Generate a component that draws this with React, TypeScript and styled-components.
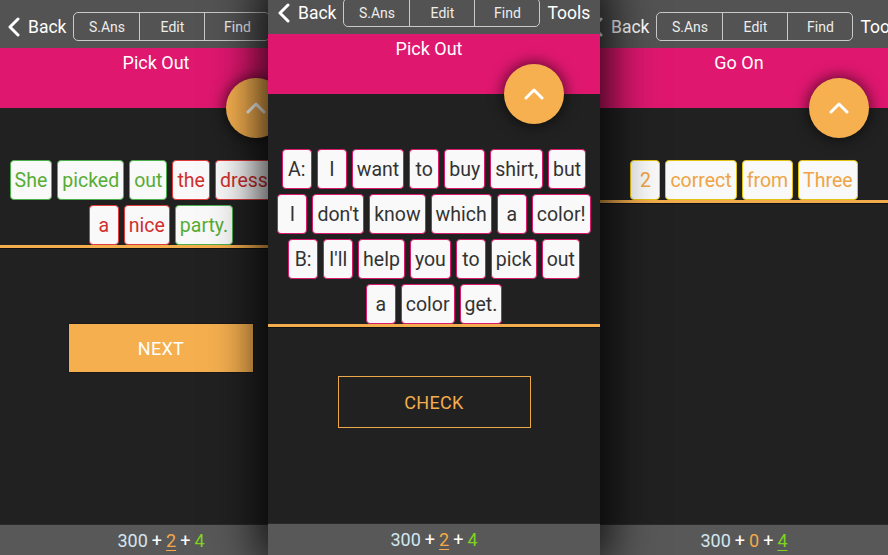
import styled, { createGlobalStyle } from "styled-components";

// Page defaults
const GlobalStyle = createGlobalStyle`
  html, body {
    margin: 0;
    padding: 0;
    background: #212121;
  }
  body {
    font-family: Roboto, "Noto Sans", "Liberation Sans", sans-serif;
  }
`;

// Row of overlapping phone screens
const Stage = styled.main`
  display: flex;
  align-items: flex-start;
  width: 888px;
  height: 555px;
  overflow: hidden;
  background: #212121;
`;

// One phone screen; the front one sits on top with a heavy shadow
const Phone = styled.section<{ $front?: boolean; $overlap?: number }>`
  flex-shrink: 0;
  display: flex;
  flex-direction: column;
  width: ${(p) => (p.$front ? 332 : 322)}px;
  height: ${(p) => (p.$front ? 569 : 555)}px;
  margin-top: ${(p) => (p.$front ? -14 : 0)}px;
  margin-left: ${(p) => -(p.$overlap || 0)}px;
  background: #212121;
  position: relative;
  z-index: ${(p) => (p.$front ? 2 : 1)};
  box-shadow: ${(p) => (p.$front ? "0 0 44px 8px rgba(0, 0, 0, 0.85)" : "none")};
`;

const TopBar = styled.header<{ $inset: number }>`
  flex-shrink: 0;
  display: flex;
  align-items: center;
  height: 48px;
  padding: 5px 0 0 ${(p) => p.$inset}px;
  box-sizing: border-box;
  background: #535353;
  color: #fff;
  white-space: nowrap;
`;

const BackLink = styled.a`
  display: flex;
  align-items: center;
  gap: 8px;
  color: #fff;
  font-size: 17.5px;
  text-decoration: none;
`;

const Segmented = styled.div`
  flex-shrink: 0;
  display: flex;
  margin-left: 7px;
  height: 29px;
  border: 1.5px solid #c9c9c9;
  border-radius: 5px;
  box-sizing: border-box;
  overflow: hidden;
`;

const Segment = styled.button`
  width: 65px;
  display: flex;
  align-items: center;
  justify-content: center;
  background: transparent;
  border: none;
  border-left: 1.5px solid #c9c9c9;
  color: #ededed;
  font-family: Roboto, "Noto Sans", sans-serif;
  font-size: 14px;
  padding: 0;

  &:first-child {
    border-left: none;
  }
`;

const Tools = styled.span`
  margin-left: 7px;
  font-size: 17.5px;
  color: #fff;
`;

// Pink title band with the round orange button on its lower edge
const TitleBand = styled.div`
  flex-shrink: 0;
  position: relative;
  z-index: 3;
  height: 60px;
  padding: 4px 10px 0 0;
  box-sizing: border-box;
  background: #df176f;
  color: #fff;
  font-size: 18px;
  line-height: 22px;
  text-align: center;
`;

const Fab = styled.button`
  position: absolute;
  right: 36px;
  bottom: -30px;
  width: 60px;
  height: 60px;
  border: none;
  border-radius: 50%;
  background: #f6b04f;
  box-shadow: 0 0 14px 2px rgba(0, 0, 0, 0.55);
  display: flex;
  align-items: center;
  justify-content: center;
  padding: 0;
`;

const Body = styled.div<{ $top: number }>`
  flex: 1;
  display: flex;
  flex-direction: column;
  padding-top: ${(p) => p.$top}px;
`;

const WordBoard = styled.div`
  display: flex;
  flex-direction: column;
  gap: 5px;
  border-bottom: 3px solid #f3ad4c;
  box-shadow: 0 1px 0 #111;
`;

const WordRow = styled.div`
  display: flex;
  justify-content: center;
  gap: 5px;
`;

type Kind = "plain" | "right" | "wrong" | "gold";

const tileColors: Record<Kind, { text: string; line: string }> = {
  plain: { text: "#333333", line: "#d8186c" },
  right: { text: "#56ad35", line: "#4cb04c" },
  wrong: { text: "#cf2f2f", line: "#e03a3a" },
  gold: { text: "#eea446", line: "#e3c214" },
};

const Tile = styled.span<{ $kind: Kind }>`
  flex-shrink: 0;
  display: flex;
  align-items: center;
  justify-content: center;
  height: 40px;
  min-width: 30px;
  padding: 0 4px;
  box-sizing: border-box;
  background: #f9f9f9;
  border: 1.5px solid ${(p) => tileColors[p.$kind].line};
  border-radius: 4px;
  color: ${(p) => tileColors[p.$kind].text};
  font-size: 19.5px;
  white-space: nowrap;
`;

const ActionButton = styled.button<{ $filled?: boolean; $gap: number; $w: number; $h: number }>`
  align-self: center;
  margin-top: ${(p) => p.$gap}px;
  width: ${(p) => p.$w}px;
  height: ${(p) => p.$h}px;
  background: ${(p) => (p.$filled ? "#f5af4f" : "transparent")};
  border: ${(p) => (p.$filled ? "1px solid #1a1a1a" : "1.5px solid #eca749")};
  color: ${(p) => (p.$filled ? "#fff" : "#f3ad4c")};
  font-family: Roboto, "Noto Sans", sans-serif;
  font-size: 18px;
  letter-spacing: 0.3px;
`;

const ScoreBar = styled.footer<{ $h: number }>`
  flex-shrink: 0;
  height: ${(p) => p.$h}px;
  display: flex;
  align-items: center;
  justify-content: center;
  gap: 4px;
  background: #585858;
  border-top: 1px solid #2a2a2a;
  box-sizing: border-box;
  font-size: 18px;
  color: #fff;
`;

const ScorePart = styled.span<{ $tone: "base" | "orange" | "green"; $mark?: boolean }>`
  color: ${(p) => (p.$tone === "base" ? "#d3e6f1" : p.$tone === "orange" ? "#f5a847" : "#7fd321")};
  text-decoration: ${(p) => (p.$mark ? "underline" : "none")};
  text-underline-offset: 3px;
`;

const Chevron = ({ up }: { up?: boolean }) =>
  up ? (
    <svg width="20" height="12" viewBox="0 0 20 12">
      <polyline points="2,10 10,2 18,10" fill="none" stroke="#fff" strokeWidth="3" strokeLinecap="round" strokeLinejoin="round" />
    </svg>
  ) : (
    <svg width="12" height="20" viewBox="0 0 12 20">
      <polyline points="10,2 2,10 10,18" fill="none" stroke="#fff" strokeWidth="3" strokeLinecap="round" strokeLinejoin="round" />
    </svg>
  );

type Word = [string, Kind];

const Header = ({ inset, title }: { inset: number; title: string }) => (
  <>
    <TopBar $inset={inset}>
      <BackLink>
        <Chevron />
        Back
      </BackLink>
      <Segmented>
        <Segment>S.Ans</Segment>
        <Segment>Edit</Segment>
        <Segment>Find</Segment>
      </Segmented>
      <Tools>Tools</Tools>
    </TopBar>
    <TitleBand>
      {title}
      <Fab>
        <Chevron up />
      </Fab>
    </TitleBand>
  </>
);

const Board = ({ rows }: { rows: Word[][] }) => (
  <WordBoard>
    {rows.map((row, i) => (
      <WordRow key={i}>
        {row.map(([text, kind], j) => (
          <Tile key={j} $kind={kind}>
            {text}
          </Tile>
        ))}
      </WordRow>
    ))}
  </WordBoard>
);

const Score = ({ h, mid, last, markMid }: { h: number; mid: string; last: string; markMid: boolean }) => (
  <ScoreBar $h={h}>
    <ScorePart $tone="base">300</ScorePart>+
    <ScorePart $tone="orange" $mark={markMid}>{mid}</ScorePart>+
    <ScorePart $tone="green" $mark={!markMid}>{last}</ScorePart>
  </ScoreBar>
);

const answered: Word[][] = [
  [["She", "right"], ["picked", "right"], ["out", "right"], ["the", "wrong"], ["dress", "wrong"], ["for", "wrong"]],
  [["a", "wrong"], ["nice", "wrong"], ["party.", "right"]],
];

const dialogue: Word[][] = [
  [["A:", "plain"], ["I", "plain"], ["want", "plain"], ["to", "plain"], ["buy", "plain"], ["shirt,", "plain"], ["but", "plain"]],
  [["I", "plain"], ["don't", "plain"], ["know", "plain"], ["which", "plain"], ["a", "plain"], ["color!", "plain"]],
  [["B:", "plain"], ["I'll", "plain"], ["help", "plain"], ["you", "plain"], ["to", "plain"], ["pick", "plain"], ["out", "plain"]],
  [["a", "plain"], ["color", "plain"], ["get.", "plain"]],
];

const result: Word[][] = [[["2", "gold"], ["correct", "gold"], ["from", "gold"], ["Three", "gold"]]];

export default function App() {
  return (
    <>
      <GlobalStyle />
      <Stage>
        <Phone>
          <Header inset={8} title="Pick Out" />
          <Body $top={52}>
            <Board rows={answered} />
            <ActionButton $filled $gap={75} $w={186} $h={50}>
              NEXT
            </ActionButton>
          </Body>
          <Score h={31} mid="2" last="4" markMid />
        </Phone>

        <Phone $front $overlap={54}>
          <Header inset={10} title="Pick Out" />
          <Body $top={55}>
            <Board rows={dialogue} />
            <ActionButton $gap={49} $w={193} $h={52}>
              CHECK
            </ActionButton>
          </Body>
          <Score h={32} mid="2" last="4" markMid />
        </Phone>

        <Phone $overlap={17}>
          <Header inset={8} title="Go On" />
          <Body $top={52}>
            <Board rows={result} />
          </Body>
          <Score h={31} mid="0" last="4" markMid={false} />
        </Phone>
      </Stage>
    </>
  );
}
